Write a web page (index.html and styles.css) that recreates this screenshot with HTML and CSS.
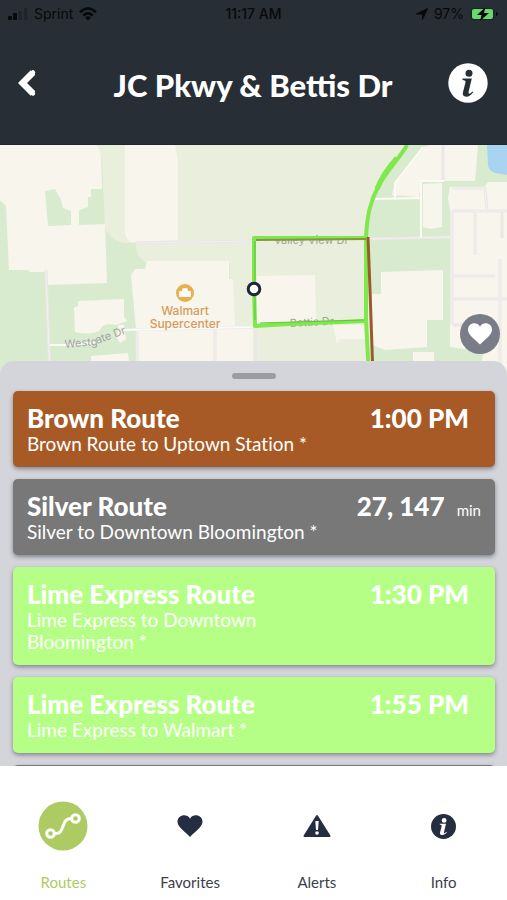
FILE: index.html
```html
<!DOCTYPE html>
<html lang="en">
<head>
<meta charset="utf-8">
<meta name="viewport" content="width=device-width, initial-scale=1">
<title>JC Pkwy &amp; Bettis Dr</title>
<link rel="stylesheet" href="styles.css">
</head>
<body>
<div class="app">
  <header class="top">
    <div class="status">
      <div class="status-side">
        <svg width="20" height="12" viewBox="0 0 20 12" aria-hidden="true"><rect x="0" y="8" width="4" height="4" rx="1"/><rect x="5" y="5" width="4" height="7" rx="1"/><g opacity=".25"><rect x="10.500" y="3" width="3.500" height="9" rx="1"/><rect x="16" y="0" width="3.500" height="12" rx="1"/></g></svg>
        <span class="carrier">Sprint</span>
        <svg width="18" height="14" viewBox="0 0 18 14" aria-hidden="true"><g fill="none" stroke="#07090b" stroke-width="2.600"><path d="M1 5.200Q9-2.200 17 5.200"/><path d="M4.200 8.400Q9 4.200 13.800 8.400"/></g><path d="M6 10.400Q9 8 12 10.400L9 13.600Z"/></svg>
      </div>
      <time class="clock">11:17 AM</time>
      <div class="status-side status-end">
        <svg width="12" height="12" viewBox="0 0 12 12" aria-hidden="true"><path d="M11.500.5 6.500 11.500V6H.5Z" stroke="#07090b" stroke-width="1"/></svg>
        <span>97%</span>
        <svg width="29" height="14" viewBox="0 0 29 14" aria-hidden="true"><rect x=".5" y="1" width="24" height="12" rx="3.500" fill="#1c2424"/><rect x="2" y="2" width="21" height="10" rx="2" fill="#66d86d"/><path d="M26 5q2 .5 2 2t-2 2Z"/><path d="M15.500 0 7 8h4.500L10 14l9-8h-5Z"/></svg>
      </div>
    </div>
    <div class="bar">
      <button class="icon-button" type="button" aria-label="Back">
        <svg width="20" height="30" viewBox="0 0 20 30" aria-hidden="true"><path d="M15 4.500 4.500 15 15 25.500" fill="none" stroke="#fff" stroke-width="6.500"/><path d="M15 4.500 4.500 15 15 25.500" fill="none" stroke="#fff" stroke-width="4.500" stroke-linecap="round"/></svg>
      </button>
      <h1>JC Pkwy &amp; Bettis Dr</h1>
      <button class="icon-button" type="button" aria-label="Stop information">
        <svg width="40" height="40" viewBox="0 0 40 40" aria-hidden="true"><circle cx="20" cy="20" r="19.700" fill="#fff"/><g fill="#272e35"><circle cx="21" cy="10.200" r="3.500"/><path d="M14.500 15.500h9.300l-3.200 13.200q-.5 2.200 1 2.100 1.200-.2 2.800-2.300l.9.500q-3.200 4.800-7.200 4.700-4-.3-3.200-4.200l2.600-10.200q.5-2.300-3-2.400Z"/></g></svg>
      </button>
    </div>
  </header>

  <section class="map" aria-label="Map">
    <svg class="map-art" viewBox="0 145 507 232" preserveAspectRatio="xMidYMin slice">
      <rect x="0" y="145" width="507" height="232" fill="#d8ebcf"/>
      <!-- Open ground -->
      <g fill="#eaeedc">
        <path d="M97 145H408Q368 190 367 240L372 377H253V262H146Q136 258 136 243H126Q112 242 105 228L102 160Q101 148 97 145Z"/>
        <path d="M229 255H256V328H232Z"/>
      </g>
      <!-- Built-up ground -->
      <g fill="#f8f5ed">
        <path d="M0 145H96Q101 148 101 158L102 189H91V197H88V207L79 210V225L105 224 107 283 48 285 46 272H30L28 270H9L6 206 0 200Z"/>
        <path d="M125 145H175L178 160V240L132 242Q124 242 125 222Z"/>
        <path d="M147 261H229V279H233L235 327H253V377H136V330L131 275 135 269H145Z"/>
        <path d="M78 301 124 299V317L127 321 116 325Q103 322 100 330 92 336 75 332L74 308 78 306Z"/>
        <path d="M91 356 128 353 131 377H91Z"/>
        <path d="M118 325h6l2 14-6 4-3-5Z"/>
        <path d="M424 147 430 145H478L475 181H421L419 197 392 195 395 183Z"/>
        <path d="M423 184 442 183V227L431 229 423 227Z"/>
        <path d="M450 187H484L488 182H507V377H477L484 352 450 347V210L448 198Z"/>
        <path d="M381 272 443 270V320H427V347L385 350 372 345V294H381Z"/>
        <path d="M413 352H434V361H413Z"/>
        <path d="M257 276 315 275 316 321 257 323Z"/>
        <path d="M333 325H366V339H340L337 344Z"/>
      </g>
      <path d="M45 191 55 189 61 200 63 208 71 211V225L48 226Z" fill="#d8ebcf"/>
      <path d="M487 145H507V175L495 173Q489 171 488 165Z" fill="#a8d4f1"/>
      <!-- Minor streets -->
      <g fill="none" stroke="#e9e7e7" stroke-width="3">
        <path d="M136 243 253 241M46 270 50 377M137 330V377M215 329V377M122 330 253 327M256 330V377"/>
        <path d="M368 239 450 237M452 188H485L487 210M452 211H507M452 211V325M475 211V255M502 211V238M453 276H495M452 299H507M453 325H475M500 259V377M443 145V182"/>
      </g>
      <g fill="none" stroke="#fcfaf5" stroke-width="2">
        <path d="M50 345H66L100 342M122 330 253 327M423 147 395 183V200M373 199 420 198M444 181H421V237"/>
      </g>
      <g fill="none" stroke="#f3f0ee" stroke-width="1">
        <path d="M136 243 253 241M46 270 50 377M137 330V377M215 329V377M368 239 450 237M452 188H485L487 210M452 211H507M452 211V325M475 211V255M453 276H495M452 299H507M500 259V377"/>
      </g>
      <g class="street">
        <text transform="translate(65 348) rotate(-5)">Westg</text>
        <text transform="translate(97 344) rotate(-20)">ate Dr</text>
        <text x="274" y="244">Valley View Dr</text>
        <text transform="translate(290 327) rotate(-3)">Bettis Dr</text>
      </g>
      <text class="place"><tspan x="185" y="315">Walmart</tspan><tspan x="185" y="328">Supercenter</tspan></text>
      <circle cx="185" cy="293" r="9" fill="#e8b04c"/>
      <path d="M179.500 291.500h11v5h-11ZM182.500 291v-1.500q0-1 1-1h3q1 0 1 1v1.500" fill="#fff" stroke="#fff" stroke-width=".8"/>
      <!-- Bus routes -->
      <g fill="none" stroke="#7ee84c" stroke-width="4" stroke-linejoin="round">
        <path d="M407 145C400 158 386 171 378 187C370 202 367 216 366 238H254V289L255 326 288 324 366 321"/>
        <path d="M366 238V320L369 377"/>
      </g>
      <path d="M397 158C388 168 382 176 377 189" fill="none" stroke="#7ee84c" stroke-width="5"/>
      <path d="M256 240 366 239" fill="none" stroke="#83963a" stroke-width="2"/>
      <path d="M260 323 364 320M255 241V320" fill="none" stroke="#5fc540" stroke-width="1"/>
      <path d="M368 237 370 290 373 377" fill="none" stroke="#9b5a2c" stroke-width="3"/>
      <circle cx="254" cy="289" r="5.800" fill="#fff" stroke="#20253a" stroke-width="3"/>
    </svg>
    <button class="save" type="button" aria-label="Save as favorite">
      <svg width="24" height="22" viewBox="0 0 24 22" aria-hidden="true"><path d="M12 21.500C9 18 0 12.500 0 6.700 0 0 8.700-2 12 3.700 15.300-2 24 0 24 6.700 24 12.500 15 18 12 21.500Z" fill="#fff"/></svg>
    </button>
  </section>

  <main class="sheet">
    <div class="grip"></div>
    <ul class="routes">
      <li class="route brown">
        <div class="info"><h2>Brown Route</h2><p>Brown Route to Uptown Station *</p></div>
        <div class="when">1:00 PM</div>
      </li>
      <li class="route silver">
        <div class="info"><h2>Silver Route</h2><p>Silver to Downtown Bloomington *</p></div>
        <div class="when minutes">27, 147 <small>min</small></div>
      </li>
      <li class="route lime">
        <div class="info"><h2>Lime Express Route</h2><p>Lime Express to Downtown Bloomington *</p></div>
        <div class="when">1:30 PM</div>
      </li>
      <li class="route lime">
        <div class="info"><h2>Lime Express Route</h2><p>Lime Express to Walmart *</p></div>
        <div class="when">1:55 PM</div>
      </li>
      <li class="route silver" aria-hidden="true"></li>
    </ul>
  </main>

  <nav class="tabs">
    <a class="tab active" href="#routes">
      <span class="tab-icon"><svg width="50" height="50" viewBox="0 0 50 50" aria-hidden="true"><circle cx="25" cy="25" r="24.500" fill="#aecb63"/><g fill="none" stroke="#fff" stroke-width="3"><circle cx="12.500" cy="32.500" r="3.800"/><circle cx="37.500" cy="17.500" r="3.800"/><path d="M16.500 32.500C28 34 22 17 33.500 17.500"/></g></svg></span>
      Routes
    </a>
    <a class="tab" href="#favorites">
      <span class="tab-icon"><svg width="26" height="22" viewBox="0 0 26 22" aria-hidden="true"><path d="M13 22C10 18 .5 12.500.5 6.700.5 0 9.700-2 13 3.700 16.300-2 25.500 0 25.500 6.700 25.500 12.500 16 18 13 22Z" fill="#252d40"/></svg></span>
      Favorites
    </a>
    <a class="tab" href="#alerts">
      <span class="tab-icon"><svg width="28" height="24" viewBox="0 0 28 24" aria-hidden="true"><path d="M14 2 26.500 22H1.500Z" fill="#252d40" stroke="#252d40" stroke-width="2" stroke-linejoin="round"/><path d="M12.300 7h3.400l-.7 9h-2Z" fill="#fff"/><circle cx="14" cy="19" r="1.800" fill="#fff"/></svg></span>
      Alerts
    </a>
    <a class="tab" href="#info">
      <span class="tab-icon"><svg width="25" height="25" viewBox="0 0 40 40" aria-hidden="true"><circle cx="20" cy="20" r="20" fill="#252d40"/><g fill="#fff"><circle cx="21" cy="10.200" r="3.800"/><path d="M14 15.500h10l-3.200 13.200q-.5 2.200 1 2.100 1.200-.2 2.800-2.300l.9.500q-3.200 4.800-7.200 4.700-4.700-.3-3.800-4.200l2.600-10.200q.5-2.300-3.100-2.400Z"/></g></svg></span>
      Info
    </a>
  </nav>
</div>
</body>
</html>
```
FILE: styles.css
```css
* { box-sizing: border-box; }

body {
  margin: 0;
  font-family: Lato, "Liberation Sans", sans-serif;
  background: #fff;
}

button {
  padding: 0;
  border: 0;
  background: none;
  cursor: pointer;
}

svg { display: block; }

.app {
  display: flex;
  flex-direction: column;
  height: 100vh;
}

/* Header */
.top {
  flex: none;
  background: #272e35;
  border-bottom: 1px solid #20272c;
  padding-bottom: 41px;
}

.status {
  display: grid;
  grid-template-columns: 1fr auto 1fr;
  align-items: center;
  height: 28px;
  padding: 0 8px;
  font: 14px/28px Inter, sans-serif;
  color: #07090b;
  fill: #07090b;
}

.status-side {
  display: flex;
  align-items: center;
  gap: 6px;
}

.status-end { justify-content: flex-end; }

.clock { font-weight: 500; }

.bar {
  display: grid;
  grid-template-columns: 40px 1fr 40px;
  align-items: center;
  padding: 35px 19px 0 18px;
}

.bar h1 {
  margin: 0;
  padding-top: 4px;
  font-size: 31px;
  line-height: 36px;
  font-weight: 900;
  text-align: center;
  color: #fff;
}

/* Map */
.map {
  position: relative;
  flex: none;
}

.map-art {
  width: 100%;
  height: 232px;
}

.street {
  font: 11px Inter, sans-serif;
  fill: #a3a4a0;
}

.place {
  font: 500 12px Inter, sans-serif;
  fill: #d99a5e;
  text-anchor: middle;
}

.save {
  position: absolute;
  right: 7px;
  bottom: 23px;
  display: grid;
  place-items: center;
  width: 40px;
  height: 40px;
  border-radius: 50%;
  background: #7a7d88;
}

/* Arrivals sheet */
.sheet {
  position: relative;
  flex: 1;
  min-height: 0;
  margin-top: -16px;
  padding: 12px 12px 0 13px;
  overflow: hidden;
  border-radius: 14px 14px 0 0;
  background: #d4d5da;
}

.grip {
  width: 44px;
  height: 6px;
  margin: 0 auto 12px;
  border-radius: 3px;
  background: #9c9da2;
}

.routes {
  display: flex;
  flex-direction: column;
  gap: 12px;
  margin: 0;
  padding: 0;
  list-style: none;
}

.route {
  display: flex;
  justify-content: space-between;
  min-height: 76px;
  padding: 12px 14px;
  border-radius: 5px;
  box-shadow: 0 2px 4px rgba(50, 52, 70, 0.5);
  color: #fff;
}

.brown { background: #a85a26; }
.silver { background: #787878; }
.lime { background: #b5ff86; }

.info { max-width: 65%; }

.route h2 {
  margin: 0;
  font-size: 26px;
  line-height: 30px;
  font-weight: 900;
}

.route p {
  margin: 0;
  font-size: 19px;
  line-height: 22px;
  font-variant-ligatures: none;
}

.lime p { max-width: 250px; }

.when {
  padding-right: 12px;
  font-size: 26px;
  line-height: 30px;
  font-weight: 900;
  white-space: nowrap;
}

.minutes { padding-right: 0; }

.when small {
  margin-left: 6px;
  font-size: 15px;
  font-weight: 400;
}

/* Tab bar */
.tabs {
  flex: none;
  display: grid;
  grid-template-columns: repeat(4, 1fr);
  padding: 35px 0 8px;
  background: #fff;
}

.tab {
  display: flex;
  flex-direction: column;
  align-items: center;
  gap: 22px;
  font-size: 15px;
  line-height: 19px;
  color: #3c4049;
  text-decoration: none;
}

.tab-icon {
  display: grid;
  place-items: center;
  height: 50px;
}

.active { color: #aecb63; }
```
